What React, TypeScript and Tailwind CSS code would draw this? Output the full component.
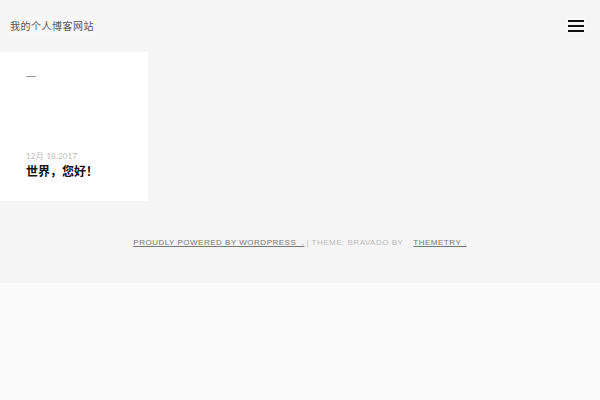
import React from "react";

const App = () => {
  return (
    <div className="min-h-[400px] w-[600px] bg-[#fafafa] font-['Lato','Noto_Sans_CJK_SC',sans-serif]">
      <header className="h-[52px] bg-[#f5f5f5] flex items-center justify-between pl-[8px] pr-[14px]">
        <div className="bg-[#f7f7f7] px-[2px] py-[3px] text-[10px] leading-[12px] text-[#555] tracking-[0.5px]">
          我的个人博客网站
        </div>
        <button className="bg-[#f7f7f7] p-[2px] flex flex-col gap-[2.5px]">
          <span className="block w-[16px] h-[2.5px] bg-[#111]" />
          <span className="block w-[16px] h-[2.5px] bg-[#111]" />
          <span className="block w-[16px] h-[2.5px] bg-[#111]" />
        </button>
      </header>

      <main className="bg-[#f5f5f5]">
        <div className="flex">
          <article className="w-[148px] h-[149px] bg-white pl-[26px] pt-[24px] pb-[22px] flex flex-col justify-between">
            <div className="w-[10px] h-[1px] bg-[#999]" />
            <div>
              <div className="text-[8px] leading-[10px] text-[#bbb] tracking-[0.2px]">12月 18.2017</div>
              <h2 className="mt-[4px] text-[12px] leading-[14px] font-bold text-[#111]">世界，您好！</h2>
            </div>
          </article>
        </div>

        <footer className="h-[82px] flex items-center justify-center pt-[1px] text-[8px] tracking-[0.5px] uppercase font-['Liberation_Sans',sans-serif]">
          <a href="#" className="text-[#777] underline underline-offset-[1px]">
            Proudly powered by WordPress&nbsp;&nbsp;.
          </a>
          <span className="text-[#bbb] ml-[2px]">| Theme: Bravado by</span>
          <a href="#" className="text-[#777] underline underline-offset-[1px] ml-[10px]">
            Themetry&nbsp;.
          </a>
        </footer>
      </main>
    </div>
  );
};

export default App;
